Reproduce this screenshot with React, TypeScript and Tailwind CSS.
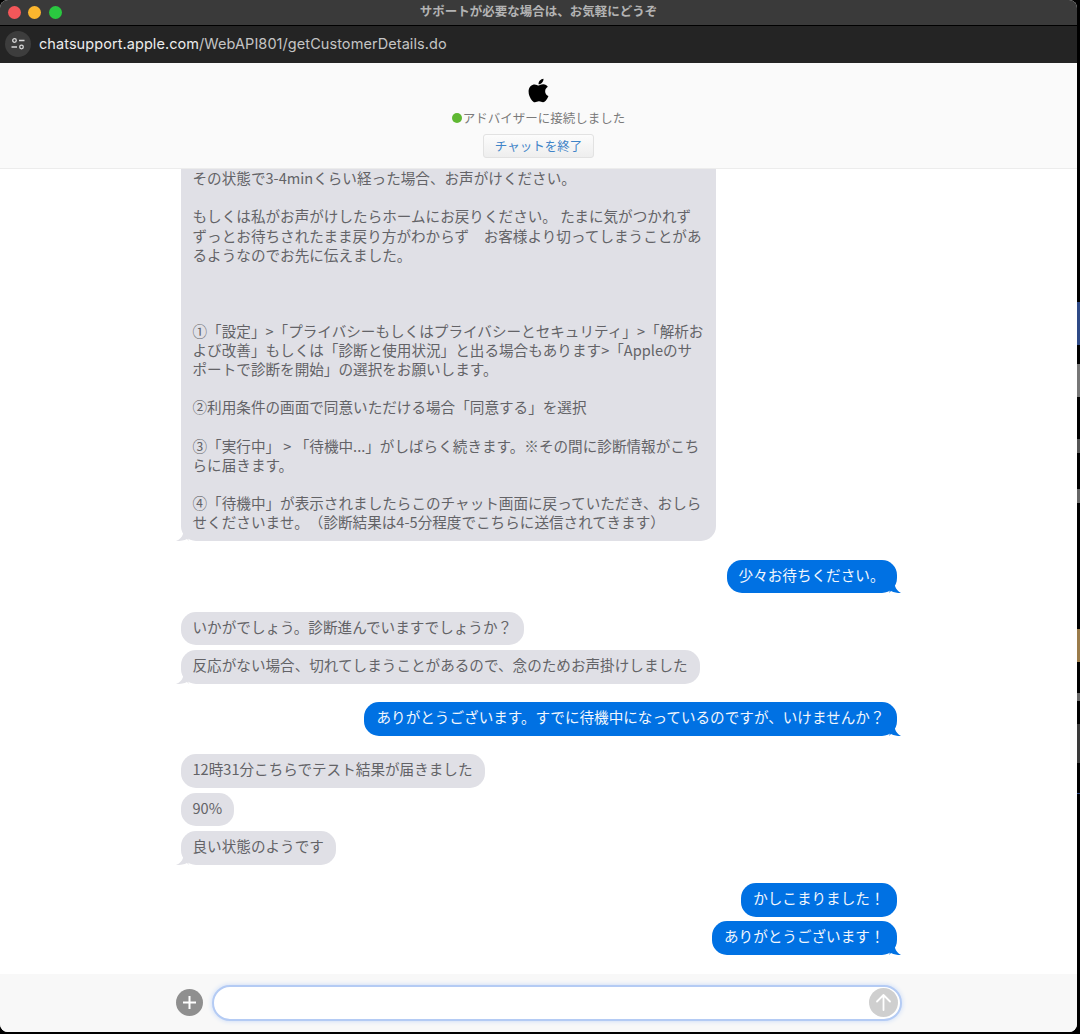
import React from 'react';
import { FaApple } from 'react-icons/fa';

const firstMessage = `その状態で3-4minくらい経った場合、お声がけください。

もしくは私がお声がけしたらホームにお戻りください。 たまに気がつかれず
ずっとお待ちされたまま戻り方がわからず　お客様より切ってしまうことがあ
るようなのでお先に伝えました。



①「設定」>「プライバシーもしくはプライバシーとセキュリティ」>「解析お
よび改善」もしくは「診断と使用状況」と出る場合もあります>「Appleのサ
ポートで診断を開始」の選択をお願いします。

②利用条件の画面で同意いただける場合「同意する」を選択

③「実行中」 > 「待機中...」がしばらく続きます。※その間に診断情報がこち
らに届きます。

④「待機中」が表示されましたらこのチャット画面に戻っていただき、おしら
せくださいませ。　（診断結果は4-5分程度でこちらに送信されてきます）`;

function Bubble({ text, me, tail, gap }: { text: string; me?: boolean; tail?: boolean; gap: string }) {
  return (
    <div className={`relative w-fit shrink-0 rounded-[15px] px-3 pt-[5.25px] pb-[9.25px] text-[14.6px] leading-[19px] whitespace-pre ${gap} ${me ? 'self-end bg-[#0071e3] text-[#f2f7fd]' : 'bg-[#e0e0e6] text-[#636367]'}`}>
      {text}
      {tail && me && (
        <svg className="absolute -right-[6px] bottom-0" width="14" height="14" viewBox="0 0 14 14">
          <path d="M5 0 L6 7 C7 10 9 12.5 12 14 C8 14 5 13.5 2 12 L0 14 Z" fill="#0071e3" />
        </svg>
      )}
      {tail && !me && (
        <svg className="absolute -left-[6px] bottom-0" width="14" height="14" viewBox="0 0 14 14">
          <path d="M9 0 L8 7 C7 10 5 12.5 1 14 C6 14 9 13.5 12 12 L14 14 Z" fill="#e0e0e6" />
        </svg>
      )}
    </div>
  );
}

export default function App() {
  return (
    <div className="flex h-[1034px] w-[1080px] overflow-hidden bg-black font-['Noto_Sans_CJK_JP','Noto_Sans',sans-serif]">
      <div className="flex h-[1032px] w-[1077px] shrink-0 flex-col overflow-hidden rounded-t-[8px] rounded-b-[8px] bg-white">
        {/* title bar */}
        <div className="relative flex h-[26px] shrink-0 items-center justify-center border-b border-black bg-[#3a3a3a] pb-[3px]">
          <div className="absolute top-[5.5px] left-[7.5px] flex gap-[7.5px]">
            <span className="h-[13px] w-[13px] rounded-full bg-[#f4575a]" />
            <span className="h-[13px] w-[13px] rounded-full bg-[#fbb62e]" />
            <span className="h-[13px] w-[13px] rounded-full bg-[#2ac840]" />
          </div>
          <span className="text-[12.5px] font-bold text-[#b3b3b3]">サポートが必要な場合は、お気軽にどうぞ</span>
        </div>

        {/* url bar */}
        <div className="flex h-[37px] shrink-0 items-center gap-[8px] bg-[#242424] pb-[1px] pl-[5px]">
          <div className="flex h-[26px] w-[26px] items-center justify-center rounded-full bg-[#3d3d3d]">
            <svg width="16" height="14" viewBox="0 0 16 14" fill="none" stroke="#d8d8d8" strokeWidth="1.3">
              <circle cx="4.5" cy="3.5" r="1.8" />
              <path d="M9 3.5h5.5" />
              <path d="M1.5 10H7" />
              <circle cx="11.5" cy="10" r="1.8" />
            </svg>
          </div>
          <span className="font-['Inter',sans-serif] text-[14.5px] tracking-[0.07px] text-[#c4c4c4]">
            <span className="text-[#ececec]">chatsupport.apple.com</span>/WebAPI801/getCustomerDetails.do
          </span>
        </div>

        {/* advisor header */}
        <div className="flex h-[106px] shrink-0 flex-col items-center border-b border-[#ececec] bg-[#fafafa] pt-[14px]">
          <FaApple className="h-[27px] w-[27px] text-black" />
          <div className="mt-[4px] flex h-[20px] items-center text-[12.5px] text-[#7a7a7a]">
            <span className="mr-[1px] h-[10px] w-[10px] rounded-full bg-[#5fb832]" />
            アドバイザーに接続しました
          </div>
          <button className="mt-[6px] flex h-[24px] w-[111px] items-center justify-center rounded-[3px] border border-[#e2e2e2] bg-gradient-to-b from-[#fcfcfc] to-[#eeeeee] text-[12.5px] text-[#3f84c8]">
            チャットを終了
          </button>
        </div>

        {/* messages, anchored to the bottom and cut off at the top */}
        <div className="flex min-h-0 flex-1 flex-col justify-end overflow-hidden pb-[19.5px]">
          <div className="mx-auto flex w-[716px] flex-col">
            <div className="relative w-[535px] shrink-0 rounded-[15px] bg-[#e0e0e6] pt-[40px] pr-[6px] pb-[10px] pl-3 text-[14.6px] leading-[19.1px] whitespace-pre text-[#636367]">
              {firstMessage}
              <svg className="absolute -left-[6px] bottom-0" width="14" height="14" viewBox="0 0 14 14">
                <path d="M9 0 L8 7 C7 10 5 12.5 1 14 C6 14 9 13.5 12 12 L14 14 Z" fill="#e0e0e6" />
              </svg>
            </div>
            <Bubble me tail gap="mt-[18.5px]" text="少々お待ちください。" />
            <Bubble gap="mt-[18.5px]" text="いかがでしょう。診断進んでいますでしょうか？" />
            <Bubble tail gap="mt-[5px]" text="反応がない場合、切れてしまうことがあるので、念のためお声掛けしました" />
            <Bubble me tail gap="mt-[18.5px]" text="ありがとうございます。すでに待機中になっているのですが、いけませんか？" />
            <Bubble gap="mt-[18.5px]" text="12時31分こちらでテスト結果が届きました" />
            <Bubble gap="mt-[5px]" text="90%" />
            <Bubble tail gap="mt-[5px]" text="良い状態のようです" />
            <Bubble me gap="mt-[18.5px]" text="かしこまりました！" />
            <Bubble me tail gap="mt-[4.5px]" text="ありがとうございます！" />
          </div>
        </div>

        {/* composer */}
        <div className="flex h-[58px] shrink-0 items-center bg-[#f8f8f8] pb-[1px] pl-[176px]">
          <div className="flex h-[27px] w-[27px] items-center justify-center rounded-full bg-[#8f8f8f]">
            <svg width="15" height="15" viewBox="0 0 15 15" stroke="#ffffff" strokeWidth="2">
              <path d="M7.5 1v13M1 7.5h13" />
            </svg>
          </div>
          <div className="ml-[9px] flex h-[36px] w-[690px] items-center justify-end rounded-full border-2 border-[#b4cbf4] bg-white pr-[2px] shadow-[0_0_5px_#c5d8f8]">
            <div className="flex h-[29px] w-[29px] items-center justify-center rounded-full bg-[#cfcfcf]">
              <svg width="17" height="19" viewBox="0 0 17 19" fill="none" stroke="#ffffff" strokeWidth="1.8" strokeLinecap="round" strokeLinejoin="round">
                <path d="M8.5 17V2M2 8.5L8.5 2L15 8.5" />
              </svg>
            </div>
          </div>
        </div>
      </div>

      {/* slivers of the desktop behind the window */}
      <div className="flex w-[3px] flex-col">
        <div className="mt-[302px] h-[43px] bg-[#2f4a86]" />
        <div className="mt-[19px] h-[33px] bg-[#777777]" />
        <div className="mt-[42px] h-[14px] bg-[#555555]" />
        <div className="mt-[36px] h-[14px] bg-[#666666]" />
        <div className="mt-[126px] h-[33px] bg-[#9a7b4a]" />
        <div className="mt-[31px] h-[8px] bg-[#666666]" />
        <div className="mt-[23px] h-[39px] bg-[#3a3a3a]" />
        <div className="mt-[30px] h-[1px] bg-[#2f4a86]" />
      </div>
    </div>
  );
}
